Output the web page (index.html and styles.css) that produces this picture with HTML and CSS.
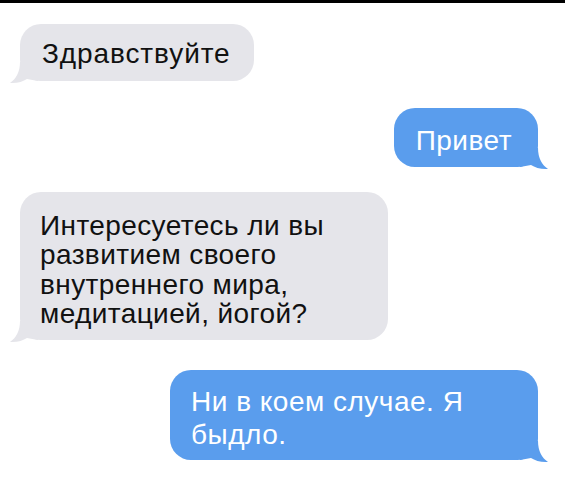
FILE: index.html
```html
<!DOCTYPE html>
<html lang="ru">
<head>
<meta charset="utf-8">
<title>Сообщения</title>
<link rel="stylesheet" href="styles.css">
</head>
<body>
<div class="topbar"></div>
<main class="thread">
  <div class="msg in m1">
    <span class="text">Здравствуйте</span>
    <svg class="tail" viewBox="0 0 30 22" aria-hidden="true"><path d="M12 0 C12 10 8 17 2 21 C9 21.5 15 19.5 19 17 L30 19 L30 0 Z"/></svg>
  </div>
  <div class="msg out m2">
    <span class="text">Привет</span>
    <svg class="tail" viewBox="0 0 30 22" aria-hidden="true"><path d="M12 0 C12 10 8 17 2 21 C9 21.5 15 19.5 19 17 L30 19 L30 0 Z"/></svg>
  </div>
  <div class="msg in wide m3">
    <span class="text">Интересуетесь ли вы развитием своего внутреннего мира, медитацией, йогой?</span>
    <svg class="tail" viewBox="0 0 30 22" aria-hidden="true"><path d="M12 0 C12 10 8 17 2 21 C9 21.5 15 19.5 19 17 L30 19 L30 0 Z"/></svg>
  </div>
  <div class="msg out wide m4">
    <span class="text">Ни в коем случае. Я быдло.</span>
    <svg class="tail" viewBox="0 0 30 22" aria-hidden="true"><path d="M12 0 C12 10 8 17 2 21 C9 21.5 15 19.5 19 17 L30 19 L30 0 Z"/></svg>
  </div>
</main>
</body>
</html>
```
FILE: styles.css
```css
html, body {
  margin: 0;
  padding: 0;
  background: #ffffff;
}

body {
  font-family: "Liberation Sans", Arial, sans-serif;
  width: 565px;
  height: 480px;
  overflow: hidden;
}

.topbar {
  height: 3px;
  background: #000000;
}

.thread {
  display: flex;
  flex-direction: column;
  align-items: flex-start;
  padding: 21px 27px 0 20px;
}

.msg {
  position: relative;
  font-size: 28px;
  line-height: 30px;
  padding: 15px 22px 12px 22px;
  border-radius: 21px;
}

.msg.wide {
  box-sizing: border-box;
  width: 368px;
}

.msg.in {
  background: #e5e5ea;
  color: #111111;
}

.msg.out {
  align-self: flex-end;
  background: #5a9ded;
  color: #ffffff;
}

.m1 {
  letter-spacing: 0.9px;
  padding-right: 23px;
}

.m2 {
  margin-top: 27px;
  letter-spacing: 0.5px;
  padding: 18px 26px 11px 22px;
}

.m3 {
  margin-top: 25px;
  line-height: 29.4px;
  letter-spacing: 0.4px;
  padding: 19px 22px 11px 20px;
}

.m4 {
  margin-top: 30px;
  line-height: 33px;
  letter-spacing: 0.5px;
  padding: 15px 22px 9px 21px;
}

/* bubble tails hang over the lower corner */
.tail {
  position: absolute;
  bottom: -3px;
  width: 30px;
  height: 22px;
}

.in .tail {
  left: -12px;
  fill: #e5e5ea;
}

.out .tail {
  right: -12px;
  fill: #5a9ded;
  transform: scaleX(-1);
}
```
